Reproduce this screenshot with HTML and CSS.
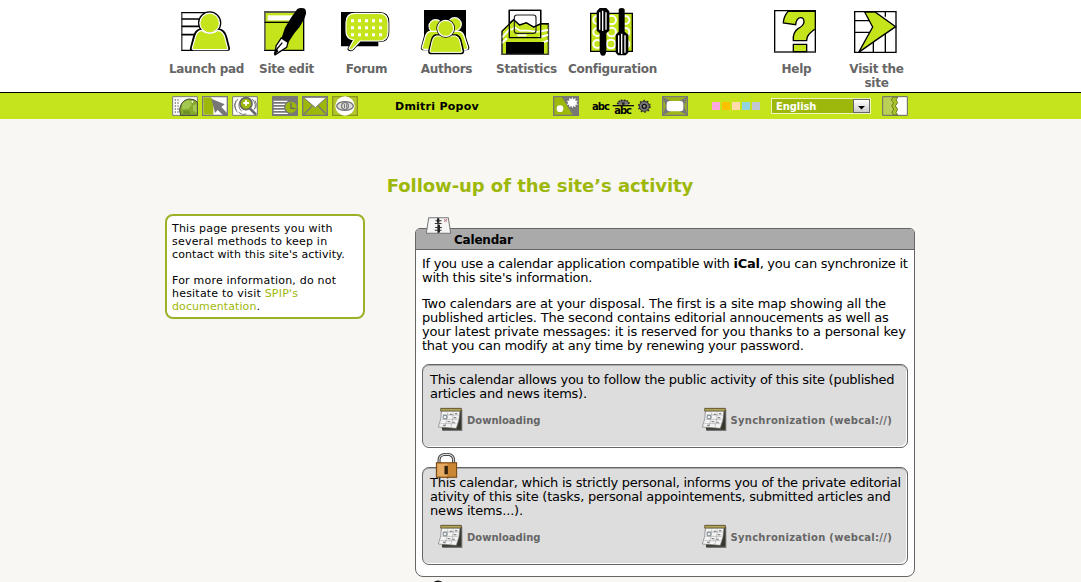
FILE: index.html
```html
<!DOCTYPE html>
<html lang="en">
<head>
<meta charset="utf-8">
<title>Follow-up of the site’s activity</title>
<link rel="stylesheet" href="styles.css">
</head>
<body>
<svg class="defs" width="0" height="0" aria-hidden="true">
  <defs>
    <symbol id="cal" viewBox="96 172 78 72">
      <path d="M108 180h64v64h-60z" fill="#777"/>
      <path d="M108 176h61v64h-58z" fill="#38382f"/>
      <path d="M109 184h56q-1 28-11 52l-54-4q10-24 9-48z" fill="#f4f4f4" stroke="#777" stroke-width="2"/>
      <path d="M107 176h62v8h-62z" fill="#b4a45a" stroke="#4c4421" stroke-width="2"/>
      <path d="M112 196h49M110 209h48M106 222h48M128 188q0 24-9 44M145 188q0 24-8 46" fill="none" stroke="#aaa" stroke-width="2"/>
      <circle cx="120" cy="202" r="6" fill="none" stroke="#6b7b85" stroke-width="3"/>
      <path d="M134 194h8M150 192h7M146 204h8M128 216h8M142 218h7M114 227h8" stroke="#888" stroke-width="4"/>
    </symbol>
  </defs>
</svg>
<header class="top">
  <nav class="wrap nav">
    <a class="item"><svg class="ico" viewBox="54 18 168 150">
      <path d="M65 38h70v113H65z" fill="#fff" stroke="#000" stroke-width="4"/>
      <path d="M65 38v113" stroke="#666" stroke-width="3"/>
      <path d="M65 57h60M65 79h60M65 104h40" stroke="#000" stroke-width="5"/>
      <circle cx="149" cy="69" r="35" fill="#000"/><path d="M118 86h63c13 4 18 14 21 26l8 32c1 6-2 9-8 9H98c-7 0-10-4-8-10l9-34c3-12 8-20 19-23z" fill="#000"/>
      <circle cx="149" cy="69" r="29.500" fill="#c5e41c" stroke="#fff" stroke-width="3.500"/>
      <path d="M124 91q25 19 50 0c13 2 18 11 21 23l8 31q1 4-3 4h-99q-5 0-4-5l9-32c3-12 7-19 18-21z" fill="#c5e41c" stroke="#fff" stroke-width="3.500"/>
    </svg><span>Launch pad</span></a>
    <a class="item"><svg class="ico" viewBox="294 18 168 150">
      <path d="M314 36h117v115H314z" fill="#c5e41c" stroke="#000" stroke-width="4"/>
      <path d="M314 36h117M314 36v115" stroke="#666" stroke-width="4"/>
      <path d="M323 46h90v15h-90z" fill="#fff"/><path d="M314 67h90" stroke="#000" stroke-width="4"/>
      <path d="M412 27q8-5 19-2 8 2 7 16l-5 15q-12 25-30 44l-21 32-20-10 13-39 19-31z" fill="#000"/>
      <path d="M364 114l20 13-4 15-34 22 2-26z" fill="#fff" stroke="#000" stroke-width="4"/>
      <path d="M350 148l17-20M343 163l10-19" stroke="#000" stroke-width="4"/><path d="M342 165l3-20 11 8z" fill="#000"/>
    </svg><span>Site edit</span></a>
    <a class="item"><svg class="ico" viewBox="534 18 168 150">
      <path d="M543 36h112v103H543z" fill="#000"/>
      <path d="M584 36h75q29 0 29 30v30q0 30-29 30h-56l-22 24q-9 7-17 1-4-4 1-11l10-18q-20-5-20-27V66q0-30 29-30z" fill="#000"/>
      <path d="M585 40h72q27 0 27 28v27q0 28-27 28h-57l-22 24q-5 4-9 1-4-2 0-7l12-21q-23-3-23-26V68q0-28 27-28z" fill="#c5e41c" stroke="#fff" stroke-width="3.500"/>
      <path d="M573 62h93M573 83h93M573 104h93" stroke="#fff" stroke-width="9" stroke-dasharray="9 12"/>
    </svg><span>Forum</span></a>
    <a class="item"><svg class="ico" viewBox="24 18 168 150">
      <path d="M42 30h126v110H42z" fill="#000"/>
      <path d="M60 90h85q16 0 20 18l11 34q1 7-7 7H42q-10 0-7-8l9-33q4-18 16-18z" fill="#c5e41c" stroke="#000" stroke-width="4"/>
      <g fill="#c5e41c" stroke="#fff" stroke-width="3.500"><circle cx="77" cy="79" r="20"/><circle cx="134" cy="73" r="20"/><path d="M62 94h86q12 4 15 17l10 31q1 6-5 6H42q-7 0-5-7l9-31q4-14 16-16z"/></g>
      <path d="M76 105h63q10 3 13 15l8 33q1 7-6 7H62q-6 0-5-7l8-33q3-12 11-15z" fill="#c5e41c" stroke="#000" stroke-width="5"/>
      <path d="M79 108h57q10 3 13 14l7 31q0 4-3 4H64q-4 0-4-4l7-31q3-12 12-14z" fill="#c5e41c" stroke="#fff" stroke-width="3"/>
      <circle cx="107" cy="85" r="28" fill="#000"/><circle cx="107" cy="85" r="24" fill="#c5e41c" stroke="#fff" stroke-width="3.500"/>
    </svg><span>Authors</span></a>
    <a class="item"><svg class="ico" viewBox="264 18 168 150">
      <path d="M298 31h94v82h-94z" fill="#fff" stroke="#000" stroke-width="4"/>
      <path d="M276 94l35-35 18 16 20-7 22 13 24-10 20 1v91H276z" fill="#c5e41c" stroke="#000" stroke-width="4"/>
      <path d="M276 112l23-24 25 5 25 0 24 4 41-7M276 129l15-14M384 113l31-9M397 128l18-7" fill="none" stroke="#fff" stroke-width="6"/>
      <path d="M301 34h88v36l-18 9-22-12-20 7-18-15-10 9z" fill="#fff"/>
      <path d="M314 46h65v26l-8 7-22-12-20 7-15-12z" fill="#fff"/>
      <path d="M302 72l9-10 18 16 20-7 22 13 17-8v34h-86z" fill="#c5e41c"/><path d="M304 90l10-8 16 10h24l32 4M322 106h28" fill="none" stroke="#fff" stroke-width="5"/>
      <rect x="313" y="45" width="65" height="55" rx="8" fill="none" stroke="#222" stroke-width="3.500"/>
      <path d="M298 31h94v82h-94zM298 70l13-11 18 16 20-7 22 13 21-10 24 0" fill="none" stroke="#000" stroke-width="4"/>
      <path d="M288 126h114v38H288z" fill="#000"/><path d="M276 98v66M416 72v92M276 163h140" stroke="#555" stroke-width="3"/>
    </svg><span>Statistics</span></a>
    <a class="item config"><svg class="ico" viewBox="522 18 168 150">
      <path d="M542 40h125v114H542z" fill="#c5e41c" stroke="#000" stroke-width="4"/>
      <g fill="none" stroke="#fff" stroke-width="6"><circle cx="562" cy="60" r="12"/><circle cx="605" cy="60" r="13"/><circle cx="646" cy="60" r="12"/><circle cx="562" cy="96" r="12"/><circle cx="605" cy="96" r="13"/><circle cx="646" cy="96" r="12"/><circle cx="562" cy="132" r="12"/><circle cx="603" cy="132" r="13"/><circle cx="646" cy="132" r="12"/></g>
      <path d="M569 24h20l9 10v58l-9 8v49q0 18-10 18t-10-18v-49l-9-8V34z" fill="#000"/><path d="M626 30q0-6 9-6t9 6v65l11 9v54l-8 8h-23l-7-8v-54l9-9z" fill="#000"/>
      <path d="M569 37v52M578 32v61M588 37v52M626 106v52M635 101v61M645 106v52" stroke="#fff" stroke-width="4"/>
    </svg><span>Configuration</span></a>
    <a class="item help"><svg class="ico" viewBox="84 18 168 150">
      <path d="M104 32h122v124H104z" fill="#fff" stroke="#000" stroke-width="4"/><path d="M104 156h122" stroke="#666" stroke-width="4"/>
      <path d="M144 34h82v54q-5 0-13 9-13 11-13 25h-40q-2-25 14-36 17-9 18-20 0-14-11-13-12 2-14 21l-37-5q1-20 14-35z" fill="#c5e41c" stroke="#000" stroke-width="4"/>
      <path d="M160 133h40v22h-40z" fill="#c5e41c" stroke="#000" stroke-width="4"/>
    </svg><span>Help</span></a>
    <a class="item"><svg class="ico" viewBox="324 18 168 150">
      <path d="M344 35h124v122H344z" fill="#fff" stroke="#000" stroke-width="4"/>
      <path d="M344 62h50M344 97h50M400 115v42M436 50v-15M436 98v59" stroke="#000" stroke-width="4"/>
      <path d="M374 36h31l62 44-61 42-50 35 42-76z" fill="#c5e41c" stroke="#000" stroke-width="4"/>
    </svg><span>Visit the<br>site</span></a>
  </nav>
</header>
<div class="bar">
  <div class="wrap tools">
    <div class="group left">
      <svg class="tool" viewBox="36 288 78 60"><path d="M38 290h74v56H38z" fill="#fff" stroke="#777" stroke-width="3"/><path d="M44 300h13M44 309h13M44 318h13M44 327h13M44 336h13" stroke="#777" stroke-width="4" stroke-dasharray="4 4"/><path d="M62 346q-8-18 2-34 9-15 26-15 14 0 23 10v39z" fill="#86a82c" stroke="#444" stroke-width="3"/><path d="M67 312q9-12 22-11l6 13-9 12-20 2z" fill="#a3c850"/><path d="M99 316l11-4v26l-11-6z" fill="#a3c850"/><path d="M70 332h18l4 10H70z" fill="#6b9226"/><circle cx="97" cy="305" r="3" fill="#fff"/></svg>
      <svg class="tool" viewBox="126 288 78 60"><path d="M128 290h74v56h-74z" fill="#fff" stroke="#777" stroke-width="4"/><path d="M130 292h22l8 9v43h-30z" fill="#9db80b"/><path d="M154 296l40 17-10 8 17 18v8h-10l-18-17-8 9z" fill="#777"/></svg>
      <svg class="tool" viewBox="216 288 78 60"><path d="M218 290h74v56h-74z" fill="#fff" stroke="#777" stroke-width="3"/><path d="M234 297q-18 18-2 40M228 302q-9 13 0 28M242 301q-12 18 3 33M277 297q15 19 5 32M285 301q7 12 2 24M236 337q11 10 23 5" fill="none" stroke="#777" stroke-width="3"/><circle cx="258" cy="311" r="18" fill="#9db80b" stroke="#666" stroke-width="5"/><path d="M250 309h17M258 301v16" stroke="#fff" stroke-width="6"/><path d="M270 326l18 18" stroke="#666" stroke-width="8"/></svg>
      <svg class="tool second" viewBox="336 288 78 60"><path d="M336 288h78v60h-78z" fill="#777"/><path d="M341 304h42M341 313h38M341 322h35M341 331h35M341 340h43" stroke="#fff" stroke-width="4"/><circle cx="393" cy="322" r="19" fill="#9db80b" stroke="#777" stroke-width="4"/><path d="M393 308v17h13" fill="none" stroke="#666" stroke-width="4"/></svg>
      <svg class="tool" viewBox="426 288 78 60"><path d="M428 290h74v56h-74z" fill="#9db80b" stroke="#777" stroke-width="4"/><path d="M430 292h70l-34 31z" fill="#fff" stroke="#777" stroke-width="3"/><path d="M430 345l27-28M501 345l-27-28" stroke="#777" stroke-width="4"/></svg>
      <svg class="tool" viewBox="516 288 78 60"><path d="M518 290h74v56h-74z" fill="#b2c72d" stroke="#8b941d" stroke-width="4"/><circle cx="555" cy="318" r="29" fill="#fff"/><ellipse cx="555" cy="318" rx="25" ry="13" fill="#ddd" stroke="#777" stroke-width="4"/><circle cx="555" cy="318" r="10" fill="#eee" stroke="#777" stroke-width="4"/><path d="M553 312v12M559 313v10" stroke="#666" stroke-width="3"/></svg>
    </div>
    <strong class="user">Dmitri Popov</strong>
    <svg class="tool contrast" viewBox="429 288 78 60"><path d="M431 290h74v56h-74z" fill="#9db80b" stroke="#777" stroke-width="4"/><path d="M455 290h50v56h-16z" fill="#777"/><circle cx="450" cy="326" r="10" fill="#fff"/><path d="M487 291l3 7 7-4-1 8 8 0-5 6 5 6-8 0 1 8-7-4-3 7-3-7-7 4 1-8-8 0 5-6-5-6 8 0-1-8 7 4z" fill="#fff"/></svg>
    <svg class="modes" viewBox="546 288 180 60">
      <text class="abc" x="546" y="329" textLength="54">abc</text><text class="abc" x="613" y="341" textLength="53">abc</text>
      <path d="M608 317h64" stroke="#111" stroke-width="4"/><path d="M623 314q0-14 17-14t17 14z" fill="#777"/><path d="M623 313q0-12 17-12t17 12" fill="none" stroke="#222" stroke-width="5" stroke-dasharray="5 3"/><circle cx="640" cy="311" r="4" fill="#222"/>
      <circle cx="703" cy="319" r="15" fill="#777" stroke="#333" stroke-width="3"/><circle cx="703" cy="319" r="17" fill="none" stroke="#333" stroke-width="5" stroke-dasharray="5 5.700"/><circle cx="703" cy="319" r="6" fill="#999" stroke="#111" stroke-width="4"/>
    </svg>
    <svg class="tool screen" viewBox="366 24 78 60"><path d="M368 26h74v56h-74z" fill="#9fb51a" stroke="#777" stroke-width="4"/><path d="M368 26l25 13h24l25-13-9 28 9 28-25-13h-24l-25 13 9-28z" fill="#777"/><rect x="380" y="39" width="50" height="31" rx="9" fill="#fff"/></svg>
    <div class="swatches"><i class="pink"></i><i class="orange"></i><i class="peach"></i><i class="blue"></i><i class="grey"></i></div>
    <div class="select"><span>English</span><b class="drop"><svg viewBox="0 0 16 14"><path d="M4 7h8L8 11z" fill="#000"/></svg></b></div>
    <svg class="tool door" viewBox="546 24 78 60"><path d="M548 26h74v56h-74z" fill="#fff"/><path d="M548 26h32l-4 10 7 8-6 10 6 9-5 10 6 9h-36z" fill="#b9cf55"/><path d="M579 27h14l-5 9 5 8-7 10 7 10-5 9 5 8h-13l-4-8 5-10-6-9 6-10-7-8z" fill="#a8c529" stroke="#6c791c" stroke-width="3"/><path d="M548 26h74v56h-74z" fill="none" stroke="#666" stroke-width="3"/></svg>
  </div>
</div>
<main class="wrap page">
  <h1>Follow-up of the site’s activity</h1>
  <div class="columns">
    <aside class="info">
      <p>This page presents you with<br>several methods to keep in<br><span class="snug">contact with this site's activity.</span></p>
      <p>For more information, do not<br>hesitate to visit <a>SPIP's<br><span class="snug">documentation</span></a>.</p>
    </aside>
    <section class="panel">
      <svg class="agenda" viewBox="62 34 74 50"><path d="M70 36h58l7 46H63z" fill="#f5f5f5" stroke="#777" stroke-width="3"/><path d="M98 36v46" stroke="#555" stroke-width="4"/><path d="M90 45h18M88 53h20M89 65h20M88 73h20" stroke="#333" stroke-width="3"/><path d="M98 38v13M100 57v23" stroke="#222" stroke-width="7"/><path d="M115 41l9 6M124 40l-8 8" stroke="#c98390" stroke-width="3"/></svg>
      <h2>Calendar</h2>
      <div class="content">
        <p>If you use a calendar application compatible with <b>iCal</b>, you can synchronize it<br><span class="mid">with this site's information.</span></p>
        <p><span class="wide">Two calendars are at your disposal. The first is a site map showing all the</span><br><span class="mid">published articles. The second contains editorial annoucements as well as</span><br><span class="wide">your latest private messages: it is reserved for you thanks to a personal key</span><br>that you can modify at any time by renewing your password.</p>
        <div class="card">
          <p>This calendar allows you to follow the public activity of this site (published<br>articles and news items).</p>
          <div class="links"><a><svg class="cal"><use href="#cal"/></svg><span>Downloading</span></a><a><svg class="cal"><use href="#cal"/></svg><span class="sync">Synchronization (webcal://)</span></a></div>
        </div>
        <div class="card private">
          <svg class="lock" viewBox="92 22 68 74"><path d="M104 53V42q0-15 21-16 22 0 22 16v11" fill="none" stroke="#444" stroke-width="9"/><path d="M104 53V42q0-15 21-16 22 0 22 16v11" fill="none" stroke="#ddd" stroke-width="3"/><path d="M96 51h60v43H96z" fill="#c98635" stroke="#71420e" stroke-width="3"/><path d="M99 54h30v37H99z" fill="#e6ab62"/><path d="M120 60h10v25h-10z" fill="#30200e"/></svg>
          <p>This calendar, which is strictly personal, informs you of the private editorial<br><span class="mid">ativity of this site (tasks, personal appointements, submitted articles and</span><br><span class="wide">news items...).</span></p>
          <div class="links"><a><svg class="cal"><use href="#cal"/></svg><span>Downloading</span></a><a><svg class="cal"><use href="#cal"/></svg><span class="sync">Synchronization (webcal://)</span></a></div>
        </div>
      </div>
    </section>
  </div>
  <svg class="next" viewBox="0 0 12 6"><path d="M0 3q6-5 12 0v3H0z" fill="#111"/></svg>
</main>
</body>
</html>
```
FILE: styles.css
```css
* { box-sizing: border-box; }
html, body { height: 100%; overflow: hidden; }
body { margin: 0; background: #f8f7f3; color: #000; font-family: Verdana, "DejaVu Sans", sans-serif; font-size: 13px; }
p, h1, h2 { margin: 0; }
svg { display: block; flex: none; }
.defs { position: absolute; }
.wrap { width: 750px; margin-left: 165px; }
.top { height: 93px; background: #fff; border-bottom: 1px solid #000; }
.nav { display: flex; padding: 6px 0 0 1px; }
.item { width: 80px; flex: none; display: flex; flex-direction: column; align-items: center; color: #666; font-size: 12px; font-weight: bold; line-height: 14px; text-align: center; white-space: nowrap; letter-spacing: -.28px; }
.item span { margin: 6px 0 0 1px; }
.config { width: 92px; }
.help { margin-left: 98px; }
.ico { width: 56px; height: 50px; }
.bar { height: 26px; background: #c5e41c; }
.tools { display: flex; align-items: center; height: 26px; padding-left: 7px; }
.group { display: flex; gap: 4px; width: 223px; }
.tool { width: 26px; height: 20px; }
.second { margin-left: 10px; }
.user { width: 158px; font-size: 11px; letter-spacing: .25px; white-space: nowrap; }
.modes { width: 60px; height: 20px; margin-left: 13px; }
.abc { font-family: "DejaVu Sans", sans-serif; font-weight: bold; font-size: 30px; }
.screen { margin-left: 10px; }
.swatches { display: flex; gap: 2px; margin-left: 24px; width: 59px; }
.swatches i { width: 8px; height: 8px; }
.pink { background: #ffa8df; }
.orange { background: #ffc000; }
.peach { background: #ffdcaa; }
.blue { background: #92d2da; }
.grey { background: #c0c7d2; }
.select { display: flex; width: 100px; height: 16px; border: 1px solid #eef5c0; background: #9db80b; color: #fff; font-size: 10px; font-weight: bold; line-height: 16px; letter-spacing: -.1px; padding-left: 4px; justify-content: space-between; }
.drop { width: 17px; height: 14px; border: 1px solid #666; background: linear-gradient(#fff, #ccc); }
.drop svg { width: 15px; height: 12px; }
.door { margin-left: 11px; }
h1 { padding-top: 56px; height: 95px; color: #9db80b; font-size: 18px; line-height: 22px; letter-spacing: -.06px; text-align: center; white-space: nowrap; }
.columns { display: flex; align-items: flex-start; gap: 50px; }
.info { width: 200px; height: 105px; border: 2px solid #9db126; border-radius: 8px; background: #fff; padding: 6px 5px; font-size: 11px; line-height: 13px; letter-spacing: .21px; white-space: nowrap; }
.info p + p { margin-top: 13px; }
.info a { color: #9db80b; }
.snug { letter-spacing: .09px; }
.panel { position: relative; width: 500px; height: 349px; margin-top: 14px; border: 1px solid #666; border-radius: 5px 5px 8px 8px; background: #fff; white-space: nowrap; }
h2 { height: 21px; border-bottom: 1px solid #666; border-radius: 4px 4px 0 0; background: #aaa; padding-left: 38px; font-size: 12px; line-height: 22px; letter-spacing: -.2px; }
.agenda { position: absolute; left: 10px; top: -12px; width: 25px; height: 17px; }
.content { padding: 7px 6px; font-size: 13px; line-height: 14px; letter-spacing: -.265px; }
.mid { letter-spacing: -.225px; }
.wide { letter-spacing: -.17px; }
.content > p + p { margin-top: 12px; }
.card { position: relative; width: 486px; height: 84px; margin-top: 11px; border: 1px solid #666; border-radius: 7px; background: #ddd; padding: 8px 7px; box-shadow: inset 0 1px #aaa, inset -1px -1px #fff; }
.private { height: 98px; margin-top: 19px; }
.lock { position: absolute; left: 12px; top: -15px; width: 23px; height: 25px; }
.links { display: flex; justify-content: space-between; padding: 6px 8px 0 7px; color: #666; font-size: 10px; font-weight: bold; line-height: 14px; letter-spacing: 0; }
.links a { display: flex; align-items: center; gap: 4px; }
.links span { padding-top: 4px; }
.links .sync { letter-spacing: .27px; }
.cal { width: 26px; height: 24px; }
.next { width: 12px; height: 5px; margin: 3px 0 0 267px; }
```
